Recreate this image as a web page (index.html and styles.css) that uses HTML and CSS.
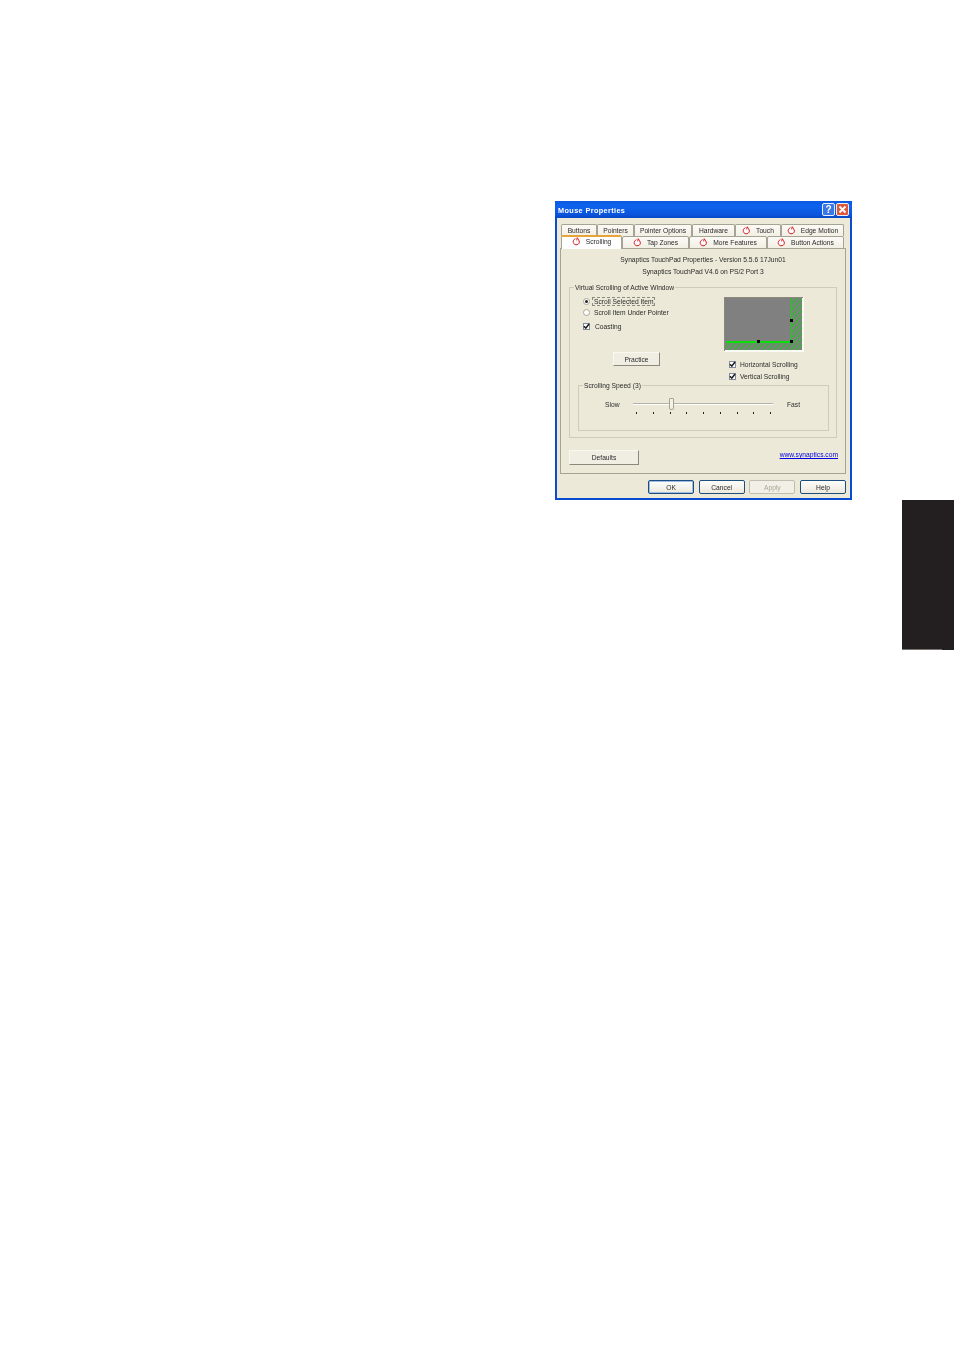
FILE: index.html
```html
<!DOCTYPE html>
<html lang="en">
<head>
<meta charset="utf-8">
<title>Mouse Properties</title>
<link rel="stylesheet" href="styles.css">
</head>
<body>
<svg class="defs" width="0" height="0" aria-hidden="true">
  <defs>
    <symbol id="swirl" viewBox="0 0 10 10">
      <path d="M3.800 1.800C2 2.800 1 4.200 1.500 6.200c.5 1.800 2.300 2.800 4.200 2.300 1.900-.5 2.900-2.200 2.300-4C7.600 3.100 6.600 2 5.800.8L5.200 3.800" fill="#fff" stroke="#d8141c" stroke-width="1.100"/>
    </symbol>
    <symbol id="tick" viewBox="0 0 7 7">
      <path d="M1 3.200l1.800 2L6 1" fill="none" stroke="#1a1a1a" stroke-width="1.500"/>
    </symbol>
    <pattern id="hatch" width="4" height="4" patternUnits="userSpaceOnUse" patternTransform="rotate(45)">
      <rect width="4" height="4" fill="#808080"/>
      <rect width="1.400" height="4" fill="#2fb82f"/>
    </pattern>
  </defs>
</svg>
<main class="page">
  <section class="window">
    <header class="titlebar">
      <span class="title">Mouse Properties</span>
      <span class="caption-buttons">
        <span class="cap cap-help">?</span>
        <span class="cap cap-close">
          <svg viewBox="0 0 11 11" width="11" height="11"><path d="M2.500 2.500l6 6M8.500 2.500l-6 6" stroke="#fff" stroke-width="1.800" fill="none"/></svg>
        </span>
      </span>
    </header>
    <nav class="tabs">
      <div class="tab-row row-back">
        <span class="tab">Buttons</span>
        <span class="tab">Pointers</span>
        <span class="tab">Pointer Options</span>
        <span class="tab">Hardware</span>
        <span class="tab"><svg class="swirl"><use href="#swirl"/></svg>Touch</span>
        <span class="tab"><svg class="swirl"><use href="#swirl"/></svg>Edge Motion</span>
      </div>
      <div class="tab-row row-front">
        <span class="tab tab-active"><svg class="swirl"><use href="#swirl"/></svg>Scrolling</span>
        <span class="tab"><svg class="swirl"><use href="#swirl"/></svg>Tap Zones</span>
        <span class="tab"><svg class="swirl"><use href="#swirl"/></svg>More Features</span>
        <span class="tab"><svg class="swirl"><use href="#swirl"/></svg>Button Actions</span>
      </div>
    </nav>
    <div class="panel">
      <p class="info">Synaptics TouchPad Properties - Version 5.5.6 17Jun01</p>
      <p class="info">Synaptics TouchPad V4.6 on PS/2 Port 3</p>
      <div class="group group-main">
        <span class="legend">Virtual Scrolling of Active Window</span>
        <div class="columns">
          <div class="col-left">
            <label class="option"><span class="radio radio-on"></span><span class="focus">Scroll Selected Item</span></label>
            <label class="option"><span class="radio"></span><span>Scroll Item Under Pointer</span></label>
            <label class="option option-coast"><span class="check"><svg class="tick"><use href="#tick"/></svg></span><span>Coasting</span></label>
            <span class="btn btn-practice">Practice</span>
          </div>
          <div class="col-right">
            <svg class="preview" viewBox="0 0 80 55" width="80" height="55">
              <rect width="80" height="55" fill="#fbfaf5"/>
              <path d="M0 0h79v1H1v53H0z" fill="#8a887c"/>
              <rect x="1" y="1" width="77" height="52" fill="#808080"/>
              <rect x="67" y="1" width="11" height="52" fill="url(#hatch)"/>
              <rect x="1" y="46" width="77" height="7" fill="url(#hatch)"/>
              <rect x="67" y="1" width="1" height="45" fill="#12d212"/>
              <rect x="2" y="44" width="66" height="2" fill="#08e008"/>
              <rect x="33" y="43" width="3" height="3" fill="#000"/>
              <rect x="66" y="22" width="3" height="3" fill="#000"/>
              <rect x="66" y="43" width="3" height="3" fill="#000"/>
            </svg>
            <label class="option option-axis first-axis"><span class="check"><svg class="tick"><use href="#tick"/></svg></span><span>Horizontal Scrolling</span></label>
            <label class="option option-axis"><span class="check"><svg class="tick"><use href="#tick"/></svg></span><span>Vertical Scrolling</span></label>
          </div>
        </div>
        <div class="group group-speed">
          <span class="legend">Scrolling Speed (3)</span>
          <div class="speed-row">
            <span class="speed-slow">Slow</span>
            <div class="slider"><span class="thumb"></span></div>
            <span class="speed-fast">Fast</span>
          </div>
          <div class="ticks">
            <i></i><i></i><i></i><i></i><i></i><i></i><i></i><i></i><i></i>
          </div>
        </div>
      </div>
      <div class="panel-foot">
        <span class="btn btn-defaults">Defaults</span>
        <a class="link" href="#">www.synaptics.com</a>
      </div>
    </div>
    <footer class="actions">
      <span class="btn-xp btn-ok">OK</span>
      <span class="btn-xp">Cancel</span>
      <span class="btn-xp btn-off">Apply</span>
      <span class="btn-xp">Help</span>
    </footer>
  </section>
  <aside class="side-tab"><span class="side-tab-edge"></span></aside>
</main>
</body>
</html>
```
FILE: styles.css
```css
* { box-sizing: border-box; }
html, body { margin: 0; padding: 0; background: #fff; }
body { height: 1351px; overflow: hidden; font-family: "Liberation Sans", Arial, sans-serif; font-size: 6.7px; color: #2a2a2a; }
.defs { display: block; height: 0; }
.page { display: flex; flex-direction: column; padding-top: 201px; }

.window {
  width: 297px; height: 299px; margin-left: 555px;
  background: #ece9d8;
  border: 2px solid #0a4ccf; border-top: 0;
  filter: blur(0.35px);
}
.titlebar {
  height: 17px; margin: 0 -2px; padding: 2px 3px 0 3px;
  display: flex; align-items: center; justify-content: space-between;
  background: linear-gradient(#0a5ae0, #0f62ee 30%, #0a55dc 80%, #0847c4);
  border-radius: 2px 2px 0 0;
}
.title { color: #fff; font-weight: 700; font-size: 7.3px; letter-spacing: 0.38px; }
.caption-buttons { display: flex; gap: 1px; margin-top: -2px; }
.cap { width: 13px; height: 13px; border: 1px solid #e8eefc; border-radius: 2px; display: flex; align-items: center; justify-content: center; color: #fff; font-weight: 700; font-size: 10px; }
.cap-help { background: #3c77e6; }
.cap-close { background: #e0583a; }

.tabs { padding: 6px 0 0 4px; }
.tab-row { display: grid; height: 12px; width: 283px; }
.row-back { grid-template-columns: 36px 37px 58px 43px 46px 63px; }
.row-front { grid-template-columns: 61px 67px 78px 77px; }
.tab {
  display: flex; align-items: center; justify-content: center; gap: 5px;
  background: linear-gradient(#fbfaf6, #f2efe4);
  border: 1px solid #a5a394; border-bottom: 0; border-radius: 2px 2px 0 0;
  white-space: nowrap;
}
.row-front .tab { border-bottom: 1px solid #a5a394; }
.tab-active {
  position: relative; z-index: 1; margin-top: -1px; height: 14px; padding-bottom: 3px;
  background: #fff; border: 1px solid #a5a394; border-top: 2px solid #e8a33a; border-bottom: 0 !important;
}
.swirl { width: 9px; height: 9px; flex: none; }

.panel {
  width: 286px; height: 226px; margin-left: 3px; padding-top: 5px;
  border: 1px solid #a5a394; background: #ece9d8;
}
.info { margin: 0; height: 12px; line-height: 11px; text-align: center; }

.group { position: relative; border: 1px solid #cfccbc; }
.legend { position: absolute; top: -6px; left: 4px; padding: 0 1px; background: #ece9d8; line-height: 11px; white-space: nowrap; }
.group-main { width: 268px; margin: 9px 0 0 8px; padding-bottom: 6px; }
.columns { display: grid; grid-template-columns: 154px 1fr; }
.col-left { padding: 8px 0 0 13px; display: flex; flex-direction: column; align-items: flex-start; }
.col-right { padding-top: 9px; display: flex; flex-direction: column; align-items: flex-start; }

.option { display: flex; align-items: center; height: 11px; gap: 4px; white-space: nowrap; }
.option-coast { margin-top: 3px; gap: 5px; }
.focus { outline: 1px dashed #8a8a80; outline-offset: 0; padding: 0 1px; margin-left: -1px; }
.radio { width: 7px; height: 7px; border: 1px solid #a9a798; border-radius: 50%; background: #fff; flex: none; display: flex; align-items: center; justify-content: center; }
.radio-on::after { content: ""; width: 3px; height: 3px; border-radius: 50%; background: #222; }
.check { width: 7px; height: 7px; border: 1px solid #7f8a9c; background: #fff; flex: none; display: flex; align-items: center; justify-content: center; }
.tick { width: 7px; height: 7px; flex: none; }

.btn { display: flex; align-items: center; justify-content: center; background: #f0eee3; border: 1px solid #f8f7f0; border-right-color: #8a887c; border-bottom-color: #8a887c; }
.btn-practice { width: 47px; height: 14px; margin: 20px 0 0 30px; }
.preview { display: block; flex: none; }
.option-axis { height: 12px; margin-left: 5px; gap: 4px; }
.first-axis { margin-top: 6px; }

.group-speed { width: 251px; margin: 3px 0 0 8px; height: 46px; }
.speed-row { display: flex; align-items: center; height: 12px; margin-top: 12px; padding-left: 26px; }
.speed-slow { width: 28px; }
.slider { position: relative; width: 140px; height: 2px; background: #b4b2a4; border-bottom: 1px solid #fff; }
.thumb { position: absolute; left: 36px; top: -5px; width: 5px; height: 12px; background: #f4f2e8; border: 1px solid #a5a394; border-radius: 1px 1px 2px 2px; }
.speed-fast { margin-left: 14px; }
.ticks { display: flex; justify-content: space-between; width: 135px; margin: 2px 0 0 57px; }
.ticks i { display: block; width: 1px; height: 2px; background: #222; }

.panel-foot { display: flex; justify-content: space-between; align-items: flex-start; width: 269px; margin: 12px 0 0 8px; }
.btn-defaults { width: 70px; height: 15px; }
.link { color: #0000e0; text-decoration: underline; line-height: 10px; }

.actions { display: flex; justify-content: flex-end; gap: 4.67px; margin-top: 6px; padding-right: 4px; }
.btn-xp { width: 46px; height: 14px; display: flex; align-items: center; justify-content: center; background: linear-gradient(#fdfdfb, #ece9dc); border: 1px solid #1c4f7e; border-radius: 2px; }
.btn-ok { box-shadow: inset 0 0 0 1px #9dbbe8; }
.btn-off { border-color: #bfbdaf; color: #a9a797; background: #f2f0e6; }

.side-tab { position: relative; align-self: flex-end; width: 52px; height: 150px; background: #231f20; }
.side-tab-edge { position: absolute; left: 0; bottom: 0; width: 40px; height: 1px; background: #77736f; }
```
